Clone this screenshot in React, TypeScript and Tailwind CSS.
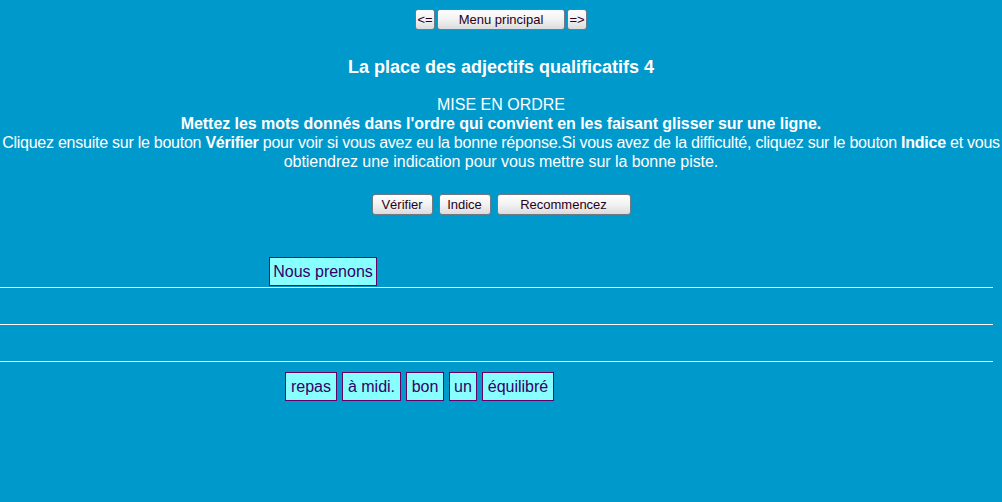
const btn =
  "h-[21px] flex items-center justify-center rounded-[3px] border border-[#6f7a86] bg-gradient-to-b from-[#fefefe] via-[#f2f2f2] to-[#dcdcdc] text-[13px] text-[#2a0018] leading-none";

const tile =
  "flex items-center justify-center h-[29px] border border-[#660066] bg-[#88ffff] text-[16px] leading-[18px] text-[#330066] whitespace-nowrap";

function Tile({ label, w }: { label: string; w: string }) {
  return <div className={`${tile} ${w}`}>{label}</div>;
}

export default function App() {
  return (
    <div
      className="w-[1002px] h-[502px] overflow-hidden bg-[#0099cc] text-white"
      style={{ fontFamily: '"Liberation Sans", Arial, sans-serif' }}
    >
      <div className="pt-[9px] flex justify-center gap-[2px]">
        <button className={`${btn} w-[20px]`}>&lt;=</button>
        <button className={`${btn} w-[128px]`}>Menu principal</button>
        <button className={`${btn} w-[20px]`}>=&gt;</button>
      </div>

      <h1 className="mt-[27px] text-center text-[18px] leading-[21px] font-bold">
        La place des adjectifs qualificatifs 4
      </h1>

      <div className="mt-[17px] flex flex-col items-center text-center text-[16px] leading-[19px]">
        <div>MISE EN ORDRE</div>
        <div className="font-bold tracking-[-0.05px]">
          Mettez les mots donnés dans l'ordre qui convient en les faisant glisser sur une ligne.
        </div>
        <div className="whitespace-nowrap tracking-[-0.25px]">
          Cliquez ensuite sur le bouton <b>Vérifier</b> pour voir si vous avez eu la bonne
          réponse.Si vous avez de la difficulté, cliquez sur le bouton <b>Indice</b> et vous
        </div>
        <div className="whitespace-nowrap tracking-[-0.05px]">
          obtiendrez une indication pour vous mettre sur la bonne piste.
        </div>
      </div>

      <div className="mt-[23px] flex justify-center gap-[6px]">
        <button className={`${btn} w-[61px]`}>Vérifier</button>
        <button className={`${btn} w-[52px]`}>Indice</button>
        <button className={`${btn} w-[134px]`}>Recommencez</button>
      </div>

      <div className="relative pt-[72px]">
        <div className="w-[993px] h-px bg-white" />
        <div className="mt-[36px] w-[993px] h-px bg-white" />
        <div className="mt-[36px] w-[993px] h-px bg-white" />

        <div className="absolute left-[269px] top-[42px]">
          <Tile label="Nous prenons" w="w-[108px]" />
        </div>

        <div className="absolute left-[285px] top-[157px] flex gap-[5px]">
          <Tile label="repas" w="w-[52px]" />
          <Tile label="à midi." w="w-[59px]" />
          <Tile label="bon" w="w-[38px]" />
          <Tile label="un" w="w-[28px]" />
          <Tile label="équilibré" w="w-[72px]" />
        </div>
      </div>
    </div>
  );
}
